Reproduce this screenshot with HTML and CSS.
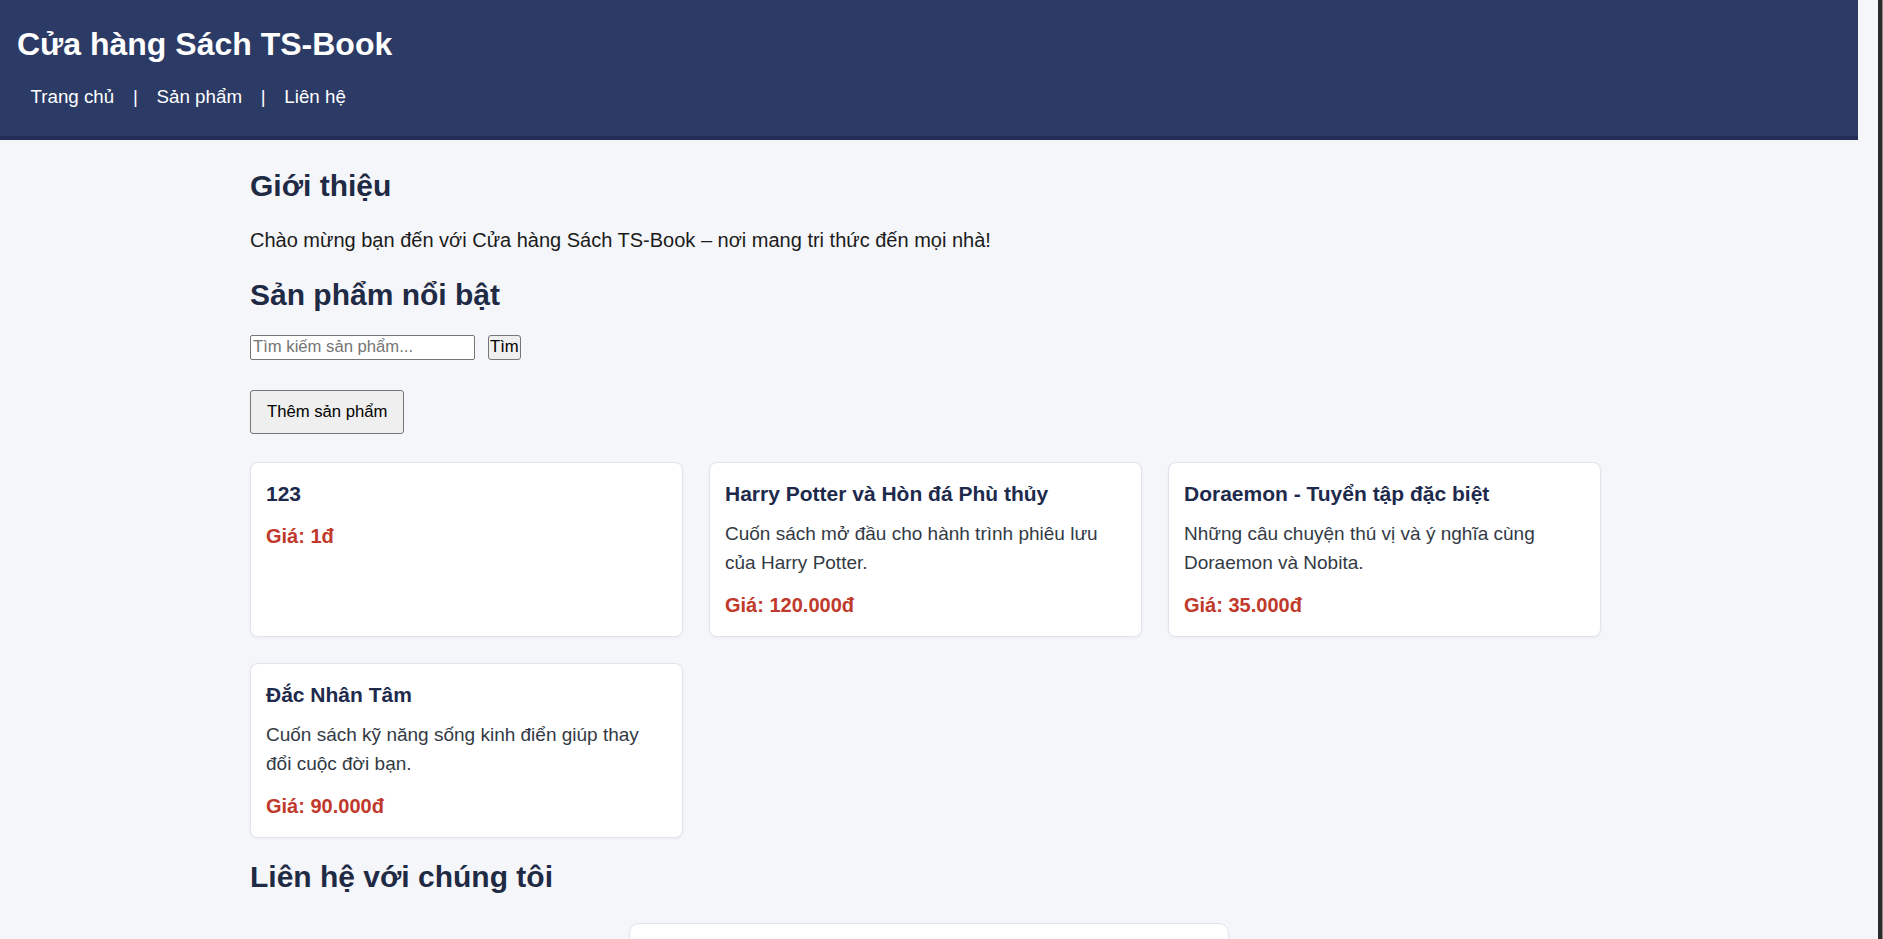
FILE: index.html
```html
<!DOCTYPE html>
<html lang="vi">
<head>
<meta charset="utf-8">
<title>Cửa hàng Sách TS-Book</title>
<link rel="stylesheet" href="styles.css">
</head>
<body>
<header class="site-header">
  <h1 class="site-title">Cửa hàng Sách TS-Book</h1>
  <nav class="site-nav">
    <a href="#" class="nav-link">Trang chủ</a> | <a href="#" class="nav-link">Sản phẩm</a> | <a href="#" class="nav-link">Liên hệ</a>
  </nav>
</header>
<main class="main">
  <h2 class="section-title intro-title">Giới thiệu</h2>
  <p class="intro-text">Chào mừng bạn đến với Cửa hàng Sách TS-Book – nơi mang tri thức đến mọi nhà!</p>

  <h2 class="section-title products-title">Sản phẩm nổi bật</h2>
  <div class="search-row">
    <input class="search-input" type="text" placeholder="Tìm kiếm sản phẩm...">
    <button class="search-btn" type="button">Tìm</button>
  </div>
  <button class="add-btn" type="button">Thêm sản phẩm</button>

  <div class="product-grid">
    <div class="card">
      <h3 class="card-title">123</h3>
      <p class="card-price">Giá: 1đ</p>
    </div>
    <div class="card">
      <h3 class="card-title">Harry Potter và Hòn đá Phù thủy</h3>
      <p class="card-desc">Cuốn sách mở đầu cho hành trình phiêu lưu của Harry Potter.</p>
      <p class="card-price">Giá: 120.000đ</p>
    </div>
    <div class="card">
      <h3 class="card-title">Doraemon - Tuyển tập đặc biệt</h3>
      <p class="card-desc">Những câu chuyện thú vị và ý nghĩa cùng Doraemon và Nobita.</p>
      <p class="card-price">Giá: 35.000đ</p>
    </div>
    <div class="card">
      <h3 class="card-title">Đắc Nhân Tâm</h3>
      <p class="card-desc">Cuốn sách kỹ năng sống kinh điển giúp thay đổi cuộc đời bạn.</p>
      <p class="card-price">Giá: 90.000đ</p>
    </div>
  </div>

  <h2 class="section-title contact-title">Liên hệ với chúng tôi</h2>
  <form class="contact-form"></form>
</main>
</body>
</html>
```
FILE: styles.css
```css
html {
  background: #f5f6fa;
}

html::after {
  content: "";
  position: fixed;
  top: 0;
  right: 0;
  bottom: 0;
  width: 5px;
  background: #2b2b2b;
  box-shadow: inset -1px 0 0 #8a8a8a;
}

body {
  margin: 0 25px 0 0;
  font-family: "Liberation Sans", Arial, sans-serif;
  color: #1b1b1b;
}

.site-header {
  background: #2c3a66;
  border-bottom: 4px solid #232e56;
  padding: 26px 16px 27.5px 17px;
  color: #ffffff;
}

.site-title {
  margin: 0;
  font-size: 32px;
  font-weight: bold;
  line-height: normal;
}

.site-nav {
  margin-top: 23px;
  font-size: 18.75px;
  line-height: normal;
}

.nav-link {
  color: #ffffff;
  text-decoration: none;
  margin: 0 13.5px;
}

.main {
  padding: 0 250px 60px;
}

.section-title {
  margin: 0;
  font-size: 30px;
  font-weight: bold;
  line-height: normal;
  color: #1f2a44;
}

.intro-title {
  padding-top: 29.4px;
}

.intro-text {
  margin: 25.7px 0 0;
  font-size: 20px;
  line-height: normal;
}

.products-title {
  margin-top: 26.8px;
}

.search-row {
  display: flex;
  gap: 13px;
  margin-top: 22.2px;
}

.search-input {
  box-sizing: border-box;
  width: 225px;
  height: 25px;
  margin: 0;
  padding: 1px 2px;
  border: 1px solid #767676;
  border-radius: 2px;
  background: #ffffff;
  font-family: "Liberation Sans", Arial, sans-serif;
  font-size: 16.67px;
  color: #000;
}

.search-input::placeholder {
  color: #757575;
}

.search-btn {
  box-sizing: border-box;
  height: 25px;
  margin: 0;
  padding: 0 1px;
  border: 1px solid #767676;
  border-radius: 3px;
  background: #efefef;
  font-family: "Liberation Sans", Arial, sans-serif;
  font-size: 16.67px;
  color: #000;
}

.add-btn {
  display: block;
  box-sizing: border-box;
  height: 44px;
  margin: 30px 0 0;
  padding: 0 16px;
  border: 1px solid #767676;
  border-radius: 3px;
  background: #efefef;
  font-family: "Liberation Sans", Arial, sans-serif;
  font-size: 16.67px;
  color: #000;
}

.product-grid {
  display: grid;
  grid-template-columns: repeat(3, 433px);
  grid-auto-rows: 175px;
  gap: 26px;
  margin-top: 28px;
}

.card {
  box-sizing: border-box;
  background: #ffffff;
  border: 1px solid #e1e4ed;
  border-radius: 8px;
  box-shadow: 0 1px 3px rgba(20, 30, 60, 0.05);
  padding: 19.7px 15px 18px;
}

.card-title {
  margin: 0 0 13.1px;
  font-size: 21px;
  font-weight: bold;
  line-height: normal;
  color: #1e2a4c;
}

.card-desc {
  margin: 0 0 16.7px;
  font-size: 19px;
  line-height: 29px;
  color: #333a45;
}

.card-price {
  margin: 0;
  font-size: 20px;
  font-weight: bold;
  line-height: normal;
  color: #c0392b;
}

.card-title + .card-price {
  margin-top: 18.8px;
}

.contact-title {
  margin-top: 22.4px;
}

.contact-form {
  box-sizing: border-box;
  width: 600px;
  height: 320px;
  margin: 29px auto 0;
  background: #ffffff;
  border: 1px solid #dfe3eb;
  border-radius: 10px;
}
```
